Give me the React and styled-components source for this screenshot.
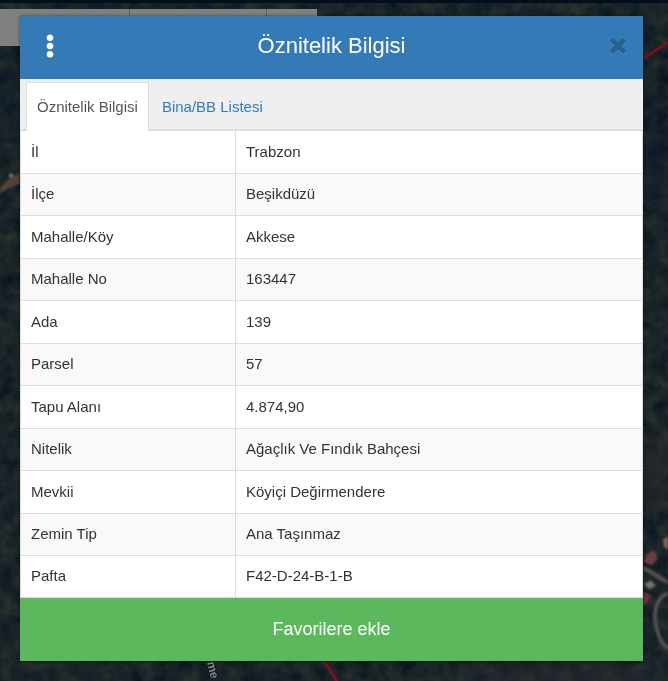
import React, { useState } from "react";
import styled, { createGlobalStyle } from "styled-components";
import { FaEllipsisV } from "react-icons/fa";

const GlobalStyle = createGlobalStyle`
  * {
    box-sizing: border-box;
  }

  body {
    margin: 0;
    background: #14202a;
    color: #333;
    font-family: "Liberation Sans", Arial, sans-serif;
    font-size: 15px;
    line-height: 21px;
  }
`;

const rows = [
  ["İl", "Trabzon"],
  ["İlçe", "Beşikdüzü"],
  ["Mahalle/Köy", "Akkese"],
  ["Mahalle No", "163447"],
  ["Ada", "139"],
  ["Parsel", "57"],
  ["Tapu Alanı", "4.874,90"],
  ["Nitelik", "Ağaçlık Ve Fındık Bahçesi"],
  ["Mevkii", "Köyiçi Değirmendere"],
  ["Zemin Tip", "Ana Taşınmaz"],
  ["Pafta", "F42-D-24-B-1-B"],
];

const SatelliteMap = () => (
  <MapSvg viewBox="0 0 668 681" preserveAspectRatio="xMidYMid slice" aria-hidden="true">
    <defs>
      <filter id="forest" x="0" y="0" width="100%" height="100%" colorInterpolationFilters="sRGB">
        <feTurbulence type="fractalNoise" baseFrequency="0.07" numOctaves="4" seed="8" />
        <feColorMatrix
          values="0.16 0 0 0 0.02
                  0.16 0 0 0 0.06
                  0.07 0 0 0 0.12
                  0 0 0 0 1"
        />
      </filter>
      <filter id="soft">
        <feGaussianBlur stdDeviation="1" />
      </filter>
      <filter id="haze" x="-50%" y="-50%" width="200%" height="200%">
        <feGaussianBlur stdDeviation="8" />
      </filter>
    </defs>
    <rect width="668" height="681" filter="url(#forest)" />
    <g filter="url(#haze)" opacity="0.5">
      <ellipse cx="655" cy="150" rx="14" ry="50" fill="#08142a" />
      <ellipse cx="8" cy="90" rx="12" ry="40" fill="#0a1a2a" />
      <ellipse cx="656" cy="470" rx="14" ry="40" fill="#30292c" />
      <ellipse cx="560" cy="674" rx="110" ry="16" fill="#2b2b30" />
    </g>
    <g filter="url(#soft)">
      <path d="M0 186l8-8 12-7v11l-12 5-8 5z" fill="#554236" />
      <circle cx="11" cy="174" r="2" fill="#88837e" />
      <path d="M643 566l12 7 13 8M668 592c-11 3-15 18-12 32 2 11 6 19 12 23" fill="none" stroke="#55514e" strokeWidth="4" />
      <path d="M646 553l8-4 4 7-6 8-8-3z" fill="#693e42" />
      <path d="M643 590l8 4-5 9-3 1z" fill="#722f46" />
      <path d="M644 582l7-3 5 5-7 4z" fill="#77716c" />
      <path d="M663 538l5-3v13l-4-3z" fill="#8b6260" />
    </g>
    <path d="M643 57l25-16" stroke="#701217" strokeWidth="3" />
    <path d="M323 658l15 23" stroke="#78121b" strokeWidth="3" />
    <text x="207" y="661" transform="rotate(76 207 661)" fontSize="12" fontWeight="bold" fill="#858585" stroke="#111b22" strokeWidth="2" paintOrder="stroke">
      me
    </text>
  </MapSvg>
);

const App = () => {
  const [tab, setTab] = useState("info");

  return (
    <>
      <GlobalStyle />
      <Backdrop>
        <SatelliteMap />
        <MapToolbar>
          <ToolbarCell $grow={130} />
          <ToolbarCell $grow={137} />
          <ToolbarCell $grow={50} />
        </MapToolbar>
      </Backdrop>
      <Page>
        <Dialog role="dialog" aria-labelledby="dialog-title">
          <Header>
            <IconButton type="button" aria-label="Menü" $width="60px">
              <FaEllipsisV size={24} />
            </IconButton>
            <Title id="dialog-title">Öznitelik Bilgisi</Title>
            <IconButton type="button" aria-label="Kapat" $width="50px" $end>
              <CloseIcon viewBox="0 0 16 16">
                <path d="M3 3l10 10M13 3l-10 10" />
              </CloseIcon>
            </IconButton>
          </Header>
          <Tabs role="tablist">
            <Tab type="button" role="tab" aria-selected={tab === "info"} $active={tab === "info"} onClick={() => setTab("info")}>
              Öznitelik Bilgisi
            </Tab>
            <Tab type="button" role="tab" aria-selected={tab === "list"} $active={tab === "list"} onClick={() => setTab("list")}>
              Bina/BB Listesi
            </Tab>
          </Tabs>
          {tab === "info" && (
            <Table>
              <tbody>
                {rows.map(([label, value]) => (
                  <Row key={label}>
                    <LabelCell scope="row">{label}</LabelCell>
                    <ValueCell>{value}</ValueCell>
                  </Row>
                ))}
              </tbody>
            </Table>
          )}
          <FavoriteButton type="button">Favorilere ekle</FavoriteButton>
        </Dialog>
      </Page>
    </>
  );
};

export default App;

const Backdrop = styled.div`
  position: fixed;
  inset: 0;
  overflow: hidden;
  border-top: 3px solid #000f1c;
`;

const MapSvg = styled.svg`
  position: absolute;
  inset: 0;
  z-index: -1;
  width: 100%;
  height: 100%;
`;

const MapToolbar = styled.div`
  display: flex;
  width: 317px;
  height: 37px;
  margin-top: 6px;
`;

const ToolbarCell = styled.div`
  flex: ${(props) => props.$grow} 0 0;
  background: #808080;

  & + & {
    border-left: 1px solid #5c5c5c;
  }
`;

const Page = styled.main`
  position: relative;
  padding: 16px 25px 20px 20px;
`;

const Dialog = styled.section`
  background: #fff;
  box-shadow: 0 0 3px rgba(0, 0, 0, 0.5);
`;

const Header = styled.header`
  display: grid;
  grid-template-columns: 1fr auto 1fr;
  align-items: center;
  height: 63px;
  padding-bottom: 3px;
  background: #337ab7;
  color: #fff;
`;

const Title = styled.h1`
  margin: 0;
  font-size: 22px;
  font-weight: 400;
  line-height: 30px;
`;

const IconButton = styled.button`
  display: flex;
  align-items: center;
  justify-content: center;
  justify-self: ${(props) => (props.$end ? "end" : "start")};
  width: ${(props) => props.$width};
  height: 40px;
  padding: 0;
  border: 0;
  background: none;
  color: inherit;
  cursor: pointer;
`;

const CloseIcon = styled.svg`
  width: 16px;
  height: 16px;
  overflow: visible;
  fill: none;
  stroke: #29628f;
  stroke-width: 5;
  stroke-linecap: round;
  filter: drop-shadow(0 1px 0 #4a8dc6);
`;

const Tabs = styled.div`
  display: flex;
  height: 51px;
  padding: 3px 6px 0;
  background: #efefef;
  border-bottom: 1px solid #ddd;
`;

const Tab = styled.button`
  height: 49px;
  margin-right: 2px;
  padding: 0 10px 2px;
  border: 1px solid ${(props) => (props.$active ? "#ddd" : "transparent")};
  border-bottom: 0;
  background: ${(props) => (props.$active ? "#fff" : "transparent")};
  color: ${(props) => (props.$active ? "#555" : "#337ab7")};
  font: inherit;
  cursor: pointer;
`;

const Table = styled.table`
  width: 100%;
  table-layout: fixed;
  border-collapse: collapse;
  border: 1px solid #ddd;
`;

const Row = styled.tr`
  height: 42px;

  &:nth-child(odd):not(:last-child) {
    height: 43px;
  }

  &:nth-child(even) {
    background: #f9f9f9;
  }
`;

const LabelCell = styled.th`
  width: 215px;
  padding: 0 10px 2px;
  border: 1px solid #ddd;
  font-weight: 400;
  text-align: left;
`;

const ValueCell = styled.td`
  padding: 0 10px 2px;
  border: 1px solid #ddd;
`;

const FavoriteButton = styled.button`
  display: block;
  width: 100%;
  height: 63px;
  padding: 0;
  border: 0;
  background: #5cb85c;
  color: #fff;
  font-family: inherit;
  font-size: 18px;
  cursor: pointer;
`;
